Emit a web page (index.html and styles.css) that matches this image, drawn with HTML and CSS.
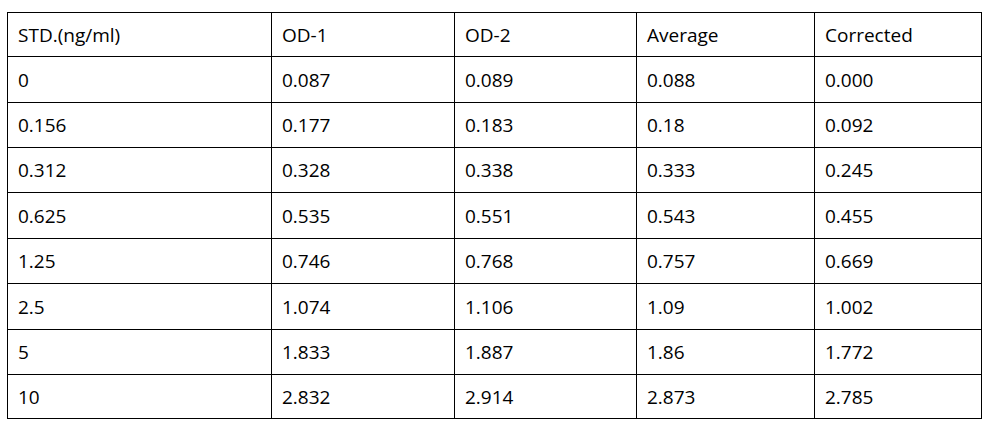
FILE: index.html
```html
<!DOCTYPE html>
<html>
<head>
<meta charset="utf-8">
<link rel="stylesheet" href="styles.css">
</head>
<body>
<table class="data">
  <colgroup>
    <col class="c1"><col class="c2"><col class="c3"><col class="c4"><col class="c5">
  </colgroup>
  <tbody>
    <tr class="r-a"><td>STD.(ng/ml)</td><td>OD-1</td><td>OD-2</td><td>Average</td><td>Corrected</td></tr>
    <tr class="r-c"><td>0</td><td>0.087</td><td>0.089</td><td>0.088</td><td>0.000</td></tr>
    <tr class="r-b"><td>0.156</td><td>0.177</td><td>0.183</td><td>0.18</td><td>0.092</td></tr>
    <tr class="r-b"><td>0.312</td><td>0.328</td><td>0.338</td><td>0.333</td><td>0.245</td></tr>
    <tr class="r-c"><td>0.625</td><td>0.535</td><td>0.551</td><td>0.543</td><td>0.455</td></tr>
    <tr class="r-b"><td>1.25</td><td>0.746</td><td>0.768</td><td>0.757</td><td>0.669</td></tr>
    <tr class="r-c"><td>2.5</td><td>1.074</td><td>1.106</td><td>1.09</td><td>1.002</td></tr>
    <tr class="r-b"><td>5</td><td>1.833</td><td>1.887</td><td>1.86</td><td>1.772</td></tr>
    <tr class="r-a"><td>10</td><td>2.832</td><td>2.914</td><td>2.873</td><td>2.785</td></tr>
  </tbody>
</table>
</body>
</html>
```
FILE: styles.css
```css
html, body {
  margin: 0;
  background: #ffffff;
}
body {
  padding: 12px 0 0 7px;
  font-family: "Open Sans", "Liberation Sans", sans-serif;
  font-size: 19px;
  color: #000000;
}
.data {
  border-collapse: collapse;
  table-layout: fixed;
  width: 975px;
}
.c1 { width: 264px; }
.c2 { width: 183px; }
.c3 { width: 182px; }
.c4 { width: 178px; }
.c5 { width: 167px; }
.data td {
  box-sizing: border-box;
  border: 1px solid #000000;
  padding: 0 0 0 10px;
  vertical-align: middle;
  white-space: nowrap;
  line-height: 24px;
}
.r-a td { height: 44px; }
.r-b td { height: 45px; }
.r-c td { height: 46px; }
```
